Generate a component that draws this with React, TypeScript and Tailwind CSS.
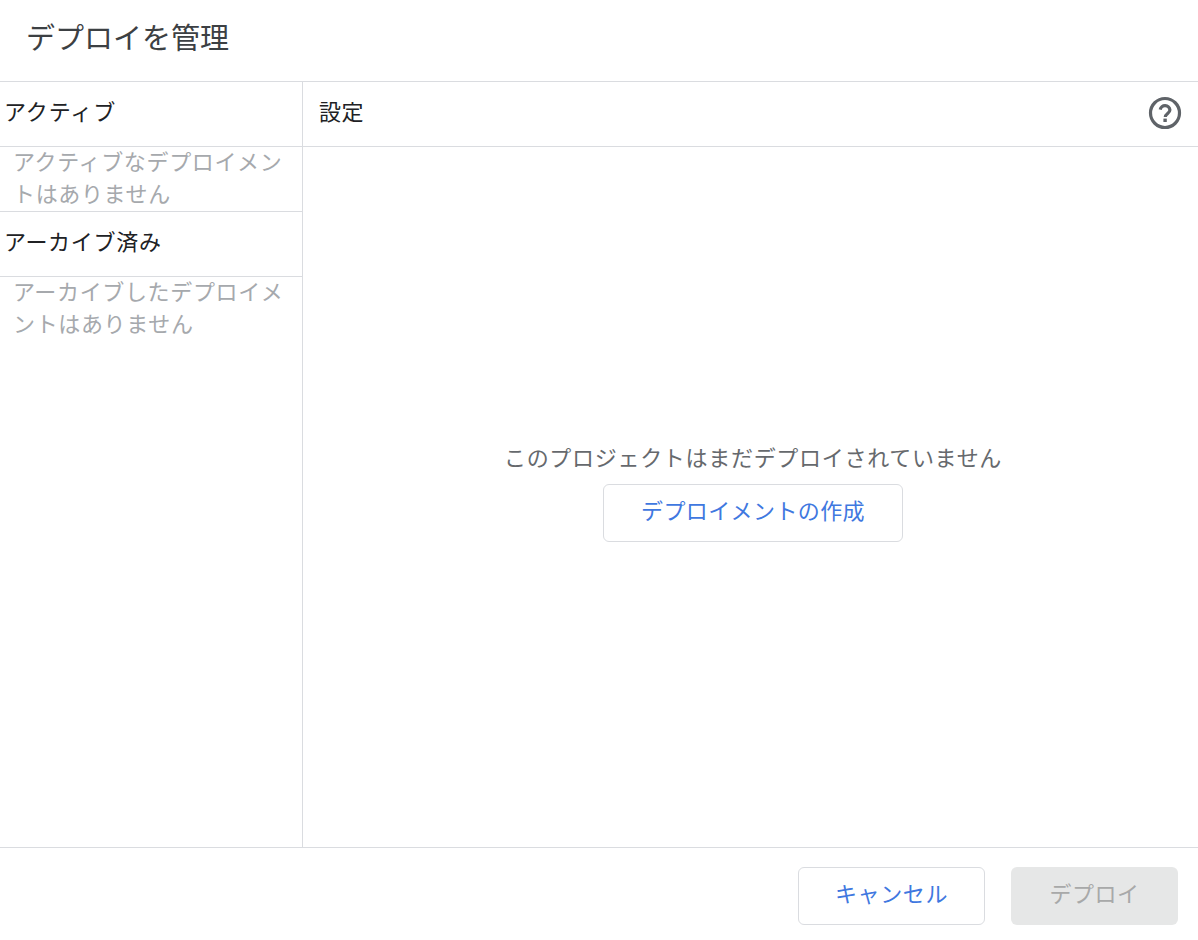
import React from "react";

const font = { fontFamily: '"Noto Sans CJK JP", "Noto Sans", sans-serif' };

function HelpIcon() {
  return (
    <svg width="34" height="34" viewBox="0 0 34 34" fill="none" aria-hidden="true">
      <circle cx="17" cy="17" r="14.5" stroke="#5f6368" strokeWidth="3.2" />
      <path d="M12.2 13.6a4.9 4.9 0 0 1 9.7.4c0 3.2-4.6 3.6-4.6 7" stroke="#5f6368" strokeWidth="3.2" fill="none" />
      <rect x="15.4" y="22.6" width="3.4" height="3.4" fill="#5f6368" />
    </svg>
  );
}

export default function App() {
  return (
    <div style={font} className="w-[1198px] h-[940px] bg-white flex flex-col overflow-hidden">
      <header className="h-[82px] shrink-0 border-b border-[#dadce0] pl-[26px] pt-[15px]">
        <h1 className="text-[29px] leading-[42px] font-normal text-[#3c4043]">デプロイを管理</h1>
      </header>
      <main className="flex-1 min-h-0 flex">
        <aside className="w-[303px] shrink-0 border-r border-[#dadce0] flex flex-col">
          <div className="h-[65px] shrink-0 border-b border-[#dadce0] pl-[4px] pb-[8px] flex items-center text-[22px] tracking-[0.9px] text-[#202124]">アクティブ</div>
          <div className="h-[65px] shrink-0 border-b border-[#dadce0] pl-[13px] pr-[16px]">
            <p className="-mt-[3px] text-[22px] leading-[32px] tracking-[0.65px] text-[#a6a9ad]">アクティブなデプロイメントはありません</p>
          </div>
          <div className="h-[65px] shrink-0 border-b border-[#dadce0] pl-[4px] pb-[8px] flex items-center text-[22px] tracking-[0.7px] text-[#202124]">アーカイブ済み</div>
          <div className="pl-[13px] pr-[16px]">
            <p className="-mt-[3px] text-[22px] leading-[32px] tracking-[0.65px] text-[#a6a9ad]">アーカイブしたデプロイメントはありません</p>
          </div>
        </aside>
        <section className="flex-1 min-w-0 flex flex-col">
          <div className="h-[65px] shrink-0 border-b border-[#dadce0] pl-[16px] pr-[16px] flex items-center justify-between">
            <span className="pb-[8px] text-[22px] tracking-[0.4px] text-[#202124]">設定</span>
            <span className="pb-[2px]"><HelpIcon /></span>
          </div>
          <div className="flex-1 flex flex-col items-center justify-center pl-[5px] pb-[12px]">
            <p className="text-[22px] leading-[32px] tracking-[0.7px] text-[#66696d]">このプロジェクトはまだデプロイされていません</p>
            <button className="mt-[12px] w-[300px] h-[58px] pb-[8px] rounded-[6px] border border-[#dadce0] bg-white text-[22px] tracking-[0.4px] text-[#3f78e0]">デプロイメントの作成</button>
          </div>
        </section>
      </main>
      <footer className="h-[93px] shrink-0 border-t border-[#dadce0] flex justify-end items-start gap-[26px] pt-[19px] pr-[20px]">
        <button className="w-[187px] h-[58px] pb-[8px] rounded-[6px] border border-[#dadce0] bg-white text-[22px] tracking-[0.6px] text-[#3f78e0]">キャンセル</button>
        <button className="w-[167px] h-[58px] pb-[8px] rounded-[6px] bg-[#e6e7e7] text-[22px] tracking-[0.5px] text-[#a8a9a9]">デプロイ</button>
      </footer>
    </div>
  );
}
